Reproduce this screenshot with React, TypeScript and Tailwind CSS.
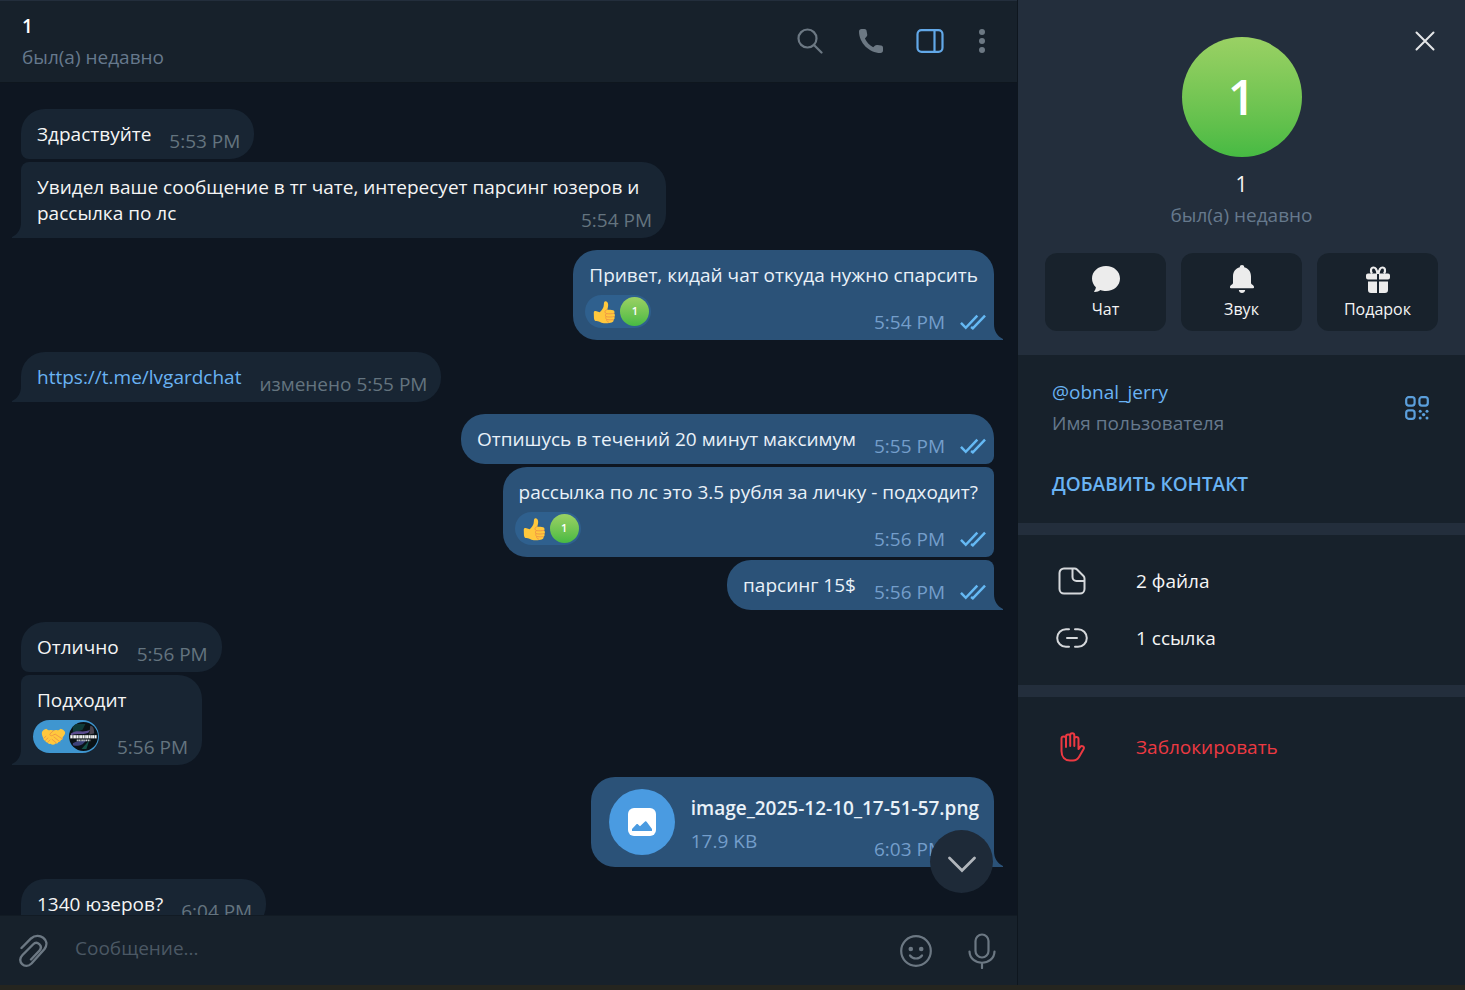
import React, { useState } from 'react';

type Message = {
  id: number;
  text?: string;
  link?: string;
  file?: { name: string; size: string };
  time: string;
  out?: boolean;
  first: boolean;
  last: boolean;
  wrap?: boolean;
  reaction?: 'like' | 'handshake';
};

const messages: Message[] = [
  { id: 1, text: 'Здраствуйте', time: '5:53 PM', first: true, last: false },
  { id: 2, text: 'Увидел ваше сообщение в тг чате, интересует парсинг юзеров и рассылка по лс', time: '5:54 PM', wrap: true, first: false, last: true },
  { id: 3, text: 'Привет, кидай чат откуда нужно спарсить', time: '5:54 PM', out: true, reaction: 'like', first: true, last: true },
  { id: 4, link: 'https://t.me/lvgardchat', time: 'изменено 5:55 PM', first: true, last: true },
  { id: 5, text: 'Отпишусь в течений 20 минут максимум', time: '5:55 PM', out: true, first: true, last: false },
  { id: 6, text: 'рассылка по лс это 3.5 рубля за личку - подходит?', time: '5:56 PM', out: true, reaction: 'like', first: false, last: false },
  { id: 7, text: 'парсинг 15$', time: '5:56 PM', out: true, first: false, last: true },
  { id: 8, text: 'Отлично', time: '5:56 PM', first: true, last: false },
  { id: 9, text: 'Подходит', time: '5:56 PM', reaction: 'handshake', first: false, last: true },
  { id: 10, file: { name: 'image_2025-12-10_17-51-57.png', size: '17.9 KB' }, time: '6:03 PM', out: true, first: true, last: true },
  { id: 11, text: '1340 юзеров?', time: '6:04 PM', first: true, last: false },
];

function ThumbsUp() {
  return (
    <svg width="23" height="26" viewBox="0 0 24 26" aria-hidden="true">
      <path d="M.8 14c0-1.700.8-2.300 2-2.100L7 13.200c2-1.600 4.300-4.600 4.300-7.700C11.300 2.500 12 1.500 13.300 1.700c2 .3 2.700 2.200 2.500 4.500-.1 1.600-.5 3-1 4.400 2 .1 4.600 0 6.200.5 1.600.6 1.900 2.200 1 3.400 1.100.9 1.200 2.400.2 3.400.7 1.100.4 2.500-.8 3.200.3 1.300-.4 2.500-1.900 2.900-2.900.9-7.600 1-10.600.2C6.500 23.500 5.500 22.500 3.800 22.500 2 22.500 1.300 21.500 1 19.500z" fill="#ffc83d" />
      <path d="M14.600 10.600c-1.200.3-2.100 1-2.100 2.200 0 .9.500 1.600 1.400 1.900-1 .6-1.300 2.200-.3 3.200-.6 1-.4 2.200.7 2.900-.4 1.500.5 2.500 2 2.800M14 14.700c2.600.4 5.200.3 7.800-.3M13.700 17.900c2.600.6 5.500.4 8.200-.1M14.400 20.900c2.200.4 4.600.5 6.700.1" fill="none" stroke="#ef9645" strokeWidth="1" strokeLinecap="round" />
    </svg>
  );
}

function Handshake() {
  return (
    <svg width="25" height="18" viewBox="0 0 26 19" aria-hidden="true">
      <path d="M.8 4.200C2 2.300 3.600 1 5.500.7c1 1.200 2.300 1.800 4.500 1.500 1.200-.2 2.200.1 3 .6.800-.5 1.800-.8 3-.6 2.200.3 3.500-.3 4.500-1.500 1.900.3 3.500 1.600 4.700 3.500.3 2-.9 3.800-2.500 5.500.2 1.500-.6 2.600-1.900 2.900-.2 1.400-1.300 2.300-2.600 2.200-.5 1.300-1.800 1.900-3 1.500-1.400 1.500-3.700 1.800-5.300.3-1.500.6-2.800-.1-3.200-1.300-1.400.1-2.200-.7-2.400-2-1.300 0-2-.9-1.900-2.200C1.400 9 .3 6.500.8 4.200z" fill="#ffc83d" />
      <path d="M13 2.800 9.300 6.200c-.6 1.700 1.400 2.800 3.500 1.200l2-.9 7.500 5M13.500 9.500l6.200 5M11.500 12l4.500 3.800M3 10.500l2-1.800M4.700 12.800l2.400-2.300M7 14.900l2.300-2.300" fill="none" stroke="#ef9645" strokeWidth="1" strokeLinecap="round" />
    </svg>
  );
}

function ChannelPhoto() {
  return (
    <svg width="29" height="29" viewBox="0 0 30 30" aria-hidden="true">
      <defs>
        <clipPath id="photo"><circle cx="15" cy="15" r="15" /></clipPath>
      </defs>
      <g clipPath="url(#photo)">
        <rect width="30" height="30" fill="#0a1216" />
        <path d="M4 2h13l-3 6-10 4z" fill="#0f3a38" />
        <path d="M2 12c6-5 12 0 20-4l-2 3c-7 3-11 0-18 3z" fill="#5a4c8e" />
        <path d="M22 4c3 0 4 3 4 8l-5 1z" fill="#4b4550" />
        <path d="M4 22c6-4 10-1 15-4l-5 5c-4 2-7 2-10 1z" fill="#3c4279" />
        <path d="m13 28 8-9-3 9z" fill="#155348" />
        <rect x="1" y="13.500" width="28" height="3.600" fill="#e8ecef" opacity="0.35" />
        <path d="M1.500 15.300h27" fill="none" stroke="#f3f5f6" strokeWidth="3" strokeDasharray="1.600 .6 1 .5 1.900 .7" />
        <path d="M8 19h14" fill="none" stroke="#c9ced3" strokeWidth="1.600" strokeDasharray="1.200 .5 1.600 .6" />
      </g>
    </svg>
  );
}

function Reaction({ kind }: { kind: 'like' | 'handshake' }) {
  if (kind === 'handshake') {
    return (
      <button aria-label="Рукопожатие" className="flex items-center justify-between w-[66px] h-[33px] pl-2 pr-[1px] rounded-full bg-[#3f96d0]">
        <Handshake />
        <ChannelPhoto />
      </button>
    );
  }
  return (
    <button aria-label="Нравится" className="flex items-center justify-between w-[66px] h-[33px] pl-2 pr-[2px] rounded-full bg-[#2f608e]">
      <ThumbsUp />
      <span className="flex items-center justify-center size-[29px] rounded-full bg-linear-to-b from-[#9ad164] to-[#46ba43] text-[11px] font-semibold text-white">1</span>
    </button>
  );
}

function Meta({ time, out }: { time: string; out?: boolean }) {
  return (
    <div className={`flex items-center gap-[15px] mb-[5px] leading-[26px] whitespace-nowrap ${out ? 'mr-2 text-[#749ecb]' : 'mr-[14px] text-[#64747f]'}`}>
      <span>{time}</span>
      {out && (
        <svg width="26" height="16" viewBox="0 0 27 16" fill="none" stroke="#65b9f4" strokeWidth="2.600" aria-hidden="true">
          <path d="m1 9 5 5L18 1.500M11.500 13.200l1.800 1.300L26 1.500" />
        </svg>
      )}
    </div>
  );
}

function Tail({ out }: { out?: boolean }) {
  return (
    <svg
      className={`absolute bottom-0 ${out ? 'left-full text-[#2b5278]' : 'right-full -scale-x-100 text-[#182533]'}`}
      width="9" height="16" viewBox="0 0 9 16" aria-hidden="true"
    >
      <path d="M0 0c0 7 3 12 9 15v1H0z" fill="currentColor" />
    </svg>
  );
}

function Bubble({ message }: { message: Message }) {
  const { text, link, file, time, out, first, last, wrap, reaction } = message;
  const corners = out
    ? `rounded-l-3xl ${first ? 'rounded-tr-3xl' : 'rounded-tr-lg'} ${last ? '' : 'rounded-br-lg'}`
    : `rounded-r-3xl ${first ? 'rounded-tl-3xl' : 'rounded-tl-lg'} ${last ? '' : 'rounded-bl-lg'}`;
  const color = out ? 'bg-[#2b5278] text-[#e9f1f8]' : 'bg-[#182533] text-[#f5f5f5]';
  const body = link ? <a href={link} className="text-[#6ab3f3]">{link}</a> : text;

  return (
    <div className={`relative shrink-0 max-w-[645px] ${out ? 'self-end' : 'self-start'} ${first ? 'mt-3' : 'mt-[3px]'} ${corners} ${color}`}>
      {file && (
        <div className="flex pt-3 pl-[18px]">
          <button aria-label="Открыть файл" className="flex items-center justify-center size-[66px] mb-3 shrink-0 rounded-full bg-[#4a9be1]">
            <svg width="28" height="28" viewBox="0 0 28 28" aria-hidden="true">
              <rect width="28" height="28" rx="6" fill="#fff" />
              <path d="M4 23v-2l4.200-4.500c.6-.6 1.300-.6 1.900 0l1.900 1.800 4.800-4.600c.7-.7 1.400-.6 2 .2L24 21v2z" fill="#4a9be1" />
            </svg>
          </button>
          <div className="ml-4 flex flex-col">
            <p className="mt-[6px] mr-[15px] leading-[26px] font-semibold">{file.name}</p>
            <div className="flex flex-1 justify-between items-end">
              <p className="mb-[13px] leading-[26px] text-[#749ecb]">{file.size}</p>
              <Meta time={time} out={out} />
            </div>
          </div>
        </div>
      )}
      {reaction && (
        <>
          <p className="pt-3 px-4 leading-[26px]">{body}</p>
          <div className="flex items-end justify-between gap-[18px] pl-3">
            <div className="mt-[7px] mb-3"><Reaction kind={reaction} /></div>
            <Meta time={time} out={out} />
          </div>
        </>
      )}
      {wrap && (
        <div className="flow-root pt-3 pl-4 leading-[26px]">
          {body}
          <div className="float-right mt-[7px]"><Meta time={time} out={out} /></div>
        </div>
      )}
      {!file && !reaction && !wrap && (
        <div className="flex items-end gap-[18px] pt-3 pl-4">
          <p className="mb-3 leading-[26px]">{body}</p>
          <Meta time={time} out={out} />
        </div>
      )}
      {last && <Tail out={out} />}
    </div>
  );
}

function ChatHeader() {
  return (
    <header className="flex items-center justify-between h-[83px] shrink-0 pl-[22px] pr-[25px] bg-[#17212b] border-t border-t-[#232e3c] border-b border-b-[#0e161e]">
      <div>
        <h1 className="leading-[26px] font-semibold text-white">1</h1>
        <p className="mt-1 leading-[28px] text-[#66798d]">был(а) недавно</p>
      </div>
      <div className="flex items-center mb-[2px] text-[#6c7883]">
        <button aria-label="Поиск" className="mr-[35px]">
          <svg width="26" height="26" viewBox="0 0 26 26" fill="none" stroke="currentColor" strokeWidth="2.200" strokeLinecap="round">
            <circle cx="10.500" cy="10.500" r="9" />
            <path d="m17 17 7.500 7.500" />
          </svg>
        </button>
        <button aria-label="Позвонить" className="mr-8">
          <svg width="26" height="26" viewBox="0 0 26 26" fill="currentColor">
            <path d="M1 3.500C1 2 2 1 3.500 1h3C7.700 1 8.400 1.700 8.600 2.900l.6 3.300c.2 1-.1 1.900-.8 2.600L6.900 10.500c1.600 3.600 4.500 6.800 8.300 8.700l1.900-1.600c.7-.6 1.500-.8 2.400-.6l3.600.6c1.200.2 1.900 1 1.900 2.100v2.800c0 1.500-1 2.500-2.500 2.500C11 25 1 14.500 1 3.500z" />
          </svg>
        </button>
        <button aria-label="Информация" className="mr-7">
          <svg width="28" height="24" viewBox="0 0 28 24" fill="none" stroke="#62a8e8" strokeWidth="2.200">
            <rect x="1.500" y="1.200" width="25" height="21.600" rx="4" />
            <path d="M18.500 1.500v21" />
          </svg>
        </button>
        <button aria-label="Меню" className="px-[7px]">
          <svg width="6" height="24" viewBox="0 0 6 24" fill="currentColor">
            <circle cx="3" cy="3" r="3" />
            <circle cx="3" cy="12" r="3" />
            <circle cx="3" cy="21" r="3" />
          </svg>
        </button>
      </div>
    </header>
  );
}

function Composer() {
  const [value, setValue] = useState('');
  return (
    <footer className="flex items-center h-[70px] shrink-0 pl-[19px] pr-[21px] bg-[#17212b] border-t border-[#121b24] text-[#6c7883]">
      <button aria-label="Прикрепить файл">
        <svg width="30" height="34" viewBox="0 0 30 34" fill="none" stroke="currentColor" strokeWidth="2.400" strokeLinecap="round">
          <path d="M2.500 14 12 4.500C20-2.500 32 6 25.500 15L12.500 29.500C6 36-3 27.500 3.500 21L14 10.500c4-4 10.500 1 6.500 6L12 25.500" />
        </svg>
      </button>
      <input
        aria-label="Сообщение"
        placeholder="Сообщение..."
        value={value}
        onChange={e => setValue(e.target.value)}
        className="flex-1 min-w-0 ml-[26px] mr-4 mb-1 bg-transparent outline-none text-white placeholder:text-[#4b5864]"
      />
      <button aria-label="Эмодзи" className="mr-9">
        <svg width="32" height="32" viewBox="0 0 32 32" fill="none" stroke="currentColor" strokeWidth="2.200" strokeLinecap="round">
          <circle cx="16" cy="16" r="14.800" />
          <circle cx="10.800" cy="14" r="2.300" fill="currentColor" stroke="none" />
          <circle cx="21.200" cy="14" r="2.300" fill="currentColor" stroke="none" />
          <path d="M10 20.500c3 4 9 4 12 0" />
        </svg>
      </button>
      <button aria-label="Голосовое сообщение">
        <svg width="28" height="36" viewBox="0 0 28 36" fill="none" stroke="currentColor" strokeWidth="2.200" strokeLinecap="round">
          <rect x="7.500" y="1.500" width="13" height="23" rx="6.500" />
          <path d="M1.500 18.500c.5 15 24.500 15 25 0M14 30v5" />
        </svg>
      </button>
    </footer>
  );
}

function ProfileAction({ label, children }: { label: string; children: React.ReactNode }) {
  return (
    <button className="flex flex-col items-center flex-1 h-[78px] pt-3 rounded-xl bg-[#18222c] text-[16px] leading-[22px] text-[#f5f5f5]">
      <span className="flex items-center justify-center h-[28px] mb-[5px]">{children}</span>
      {label}
    </button>
  );
}

function ProfilePanel() {
  return (
    <aside className="flex flex-col w-[447px] shrink-0 bg-[#17212b]">
      <div className="relative flex flex-col items-center h-[355px] shrink-0 pt-[37px] px-[27px] bg-[#232e3c]">
        <button aria-label="Закрыть" className="absolute top-[31px] right-[30px] text-[#e4e6e8]">
          <svg className="block" width="20" height="20" viewBox="0 0 20 20" fill="none" stroke="currentColor" strokeWidth="2" strokeLinecap="round">
            <path d="m1.500 1.500 17 17M18.500 1.500l-17 17" />
          </svg>
        </button>
        <div className="flex items-center justify-center size-[120px] rounded-full bg-linear-to-b from-[#9ad164] to-[#46ba43] text-[48px] font-semibold text-white">1</div>
        <h2 className="mt-[13px] leading-[28px] text-[21px] text-[#f5f5f5]">1</h2>
        <p className="mt-[3px] leading-[28px] text-[#66798d]">был(а) недавно</p>
        <div className="flex self-stretch gap-[15px] mt-6">
          <ProfileAction label="Чат">
            <svg width="28" height="26" viewBox="0 0 28 26" fill="#ececec">
              <path d="M14 0c8 0 14 5.500 14 12.500S22 25 14 25c-2 0-4-.3-5.500-1-1.500 1.200-3.500 2-5.700 2-.6 0-.8-.6-.4-1 .9-1 1.400-2.200 1.500-3.700C1.500 19 0 16 0 12.500 0 5.500 6 0 14 0z" />
            </svg>
          </ProfileAction>
          <ProfileAction label="Звук">
            <svg width="24" height="28" viewBox="0 0 24 28" fill="#ececec">
              <path d="M12 0c1.400 0 2.200.9 2.200 2.300C18.500 3.400 21 6.800 21 11.500V18c0 1.500 3 2 3 4v.5c0 .5-.4.700-.9.700H.9c-.5 0-.9-.2-.9-.7V22c0-2 3-2.500 3-4v-6.500c0-4.700 2.500-8.100 6.800-9.200C9.800.9 10.600 0 12 0zM8.800 25h6.400c-.2 1.800-1.500 3-3.200 3s-3-1.200-3.200-3z" />
            </svg>
          </ProfileAction>
          <ProfileAction label="Подарок">
            <svg width="24" height="27" viewBox="0 0 24 27" fill="#ececec">
              <path d="M2 7.500h9v6H2a2 2 0 0 1-2-2v-2c0-1.100.9-2 2-2zM13 7.500h9a2 2 0 0 1 2 2v2a2 2 0 0 1-2 2h-9zM2 15.500h9V27H5a3 3 0 0 1-3-3zM13 15.500h9V24a3 3 0 0 1-3 3h-6z" />
              <path d="M11.500 8C11 4 10 1.500 7.500 1.500S4 5 6 7.500M12.500 8c.5-4 1.500-6.500 4-6.500S20 5 18 7.500" fill="none" stroke="#ececec" strokeWidth="2.200" />
            </svg>
          </ProfileAction>
        </div>
      </div>

      <section className="h-[168px] shrink-0 pt-[23px] pl-[34px] pr-9">
        <div className="flex items-center justify-between">
          <div>
            <a href="#obnal_jerry" className="block leading-[28px] text-[#6ab3f3]">@obnal_jerry</a>
            <p className="mt-[3px] leading-[28px] text-[#66798d]">Имя пользователя</p>
          </div>
          <button aria-label="QR-код" className="text-[#5b9fdc]">
            <svg className="block" width="24" height="24" viewBox="0 0 24 24" fill="none" stroke="currentColor" strokeWidth="2.200">
              <rect x="1.200" y="1.200" width="8.400" height="8.400" rx="2.500" />
              <rect x="14.400" y="1.200" width="8.400" height="8.400" rx="2.500" />
              <rect x="1.200" y="14.400" width="8.400" height="8.400" rx="2.500" />
              <g fill="currentColor" stroke="none">
                <circle cx="15.200" cy="15.200" r="1.500" />
                <circle cx="22" cy="15.200" r="1.500" />
                <circle cx="18.600" cy="18.600" r="1.700" />
                <circle cx="15.200" cy="22" r="1.500" />
                <circle cx="22" cy="22" r="1.500" />
              </g>
            </svg>
          </button>
        </div>
        <button className="mt-[33px] leading-[28px] font-semibold text-[#6ab3f3]">ДОБАВИТЬ КОНТАКТ</button>
      </section>

      <div className="h-3 shrink-0 bg-[#232e3c]" />
      <section className="flex flex-col h-[150px] shrink-0 pt-[18px] text-[#f5f5f5]">
        <button className="flex items-center h-[57px] pl-[38px]">
          <span className="flex justify-center w-8 mr-12 mb-[2px]">
            <svg width="28" height="28" viewBox="0 0 28 28" fill="none" stroke="#d5d8db" strokeWidth="2" strokeLinejoin="round">
              <path d="M6 1.500h10.500c1 0 1.800.3 2.500 1l6.500 6.500c.7.700 1 1.500 1 2.500V22a4.500 4.500 0 0 1-4.500 4.500H6A4.500 4.500 0 0 1 1.500 22V6A4.500 4.500 0 0 1 6 1.500zM14.500 2v8a4 4 0 0 0 4 4h8" />
            </svg>
          </span>
          2 файла
        </button>
        <button className="flex items-center h-[57px] pl-[38px]">
          <span className="flex justify-center w-8 mr-12 mb-[2px]">
            <svg width="32" height="20" viewBox="0 0 32 20" fill="none" stroke="#d5d8db" strokeWidth="2" strokeLinecap="round">
              <path d="M13 1.200h-3a8.800 8.800 0 0 0 0 17.600h3M19 1.200h3a8.800 8.800 0 0 1 0 17.600h-3M11 10h10" />
            </svg>
          </span>
          1 ссылка
        </button>
      </section>

      <div className="h-3 shrink-0 bg-[#232e3c]" />
      <button className="flex items-center h-[57px] shrink-0 mt-[22px] pl-[38px] text-[#ec3942]">
        <span className="flex justify-center w-8 mr-12 mb-[2px]">
          <svg width="26" height="30" viewBox="0 0 26 30" fill="none" stroke="currentColor" strokeWidth="2" strokeLinecap="round" strokeLinejoin="round">
            <path d="M7 15V6.500c0-2.600-4.500-2.600-4.500 0V19c0 6 3.500 9.500 8.500 9.500h3c2.500 0 4.500-1 6-3.500l4.600-8c1.200-2.300-1.600-3.800-3.300-2.200L19.500 17V7c0-2.800-4.200-2.800-4.200 0v7M7 7V4.500c0-2.700 4.200-2.700 4.200 0V14M11.200 4.500V3.200c0-2.700 4.100-2.700 4.100 0V7" />
          </svg>
        </span>
        Заблокировать
      </button>
    </aside>
  );
}

export default function App() {
  return (
    <div className="flex flex-col h-screen overflow-hidden bg-[#17212b] font-['Open_Sans','Noto_Sans',sans-serif] text-[19px]">
      <div className="flex flex-1 min-h-0">
        <main className="relative flex flex-col flex-1 min-w-0 border-r border-[#0e161e]">
          <ChatHeader />
          <div className="flex flex-col flex-1 min-h-0 overflow-hidden pt-[14px] pl-[21px] pr-[23px] bg-[#0e1621]">
            {messages.map(m => <Bubble key={m.id} message={m} />)}
          </div>
          <button aria-label="Вниз" className="absolute right-6 bottom-[92px] flex items-center justify-center size-[63px] pt-1 rounded-full bg-[#1e2a38] text-[#b1b6bc]">
            <svg width="28" height="18" viewBox="0 0 28 18" fill="none" stroke="currentColor" strokeWidth="2.700" strokeLinecap="round">
              <path d="m1.500 3 12.500 12.500L26.500 3" />
            </svg>
          </button>
          <Composer />
        </main>
        <ProfilePanel />
      </div>
      <div className="h-[5px] shrink-0 bg-[#25251f]" />
    </div>
  );
}
